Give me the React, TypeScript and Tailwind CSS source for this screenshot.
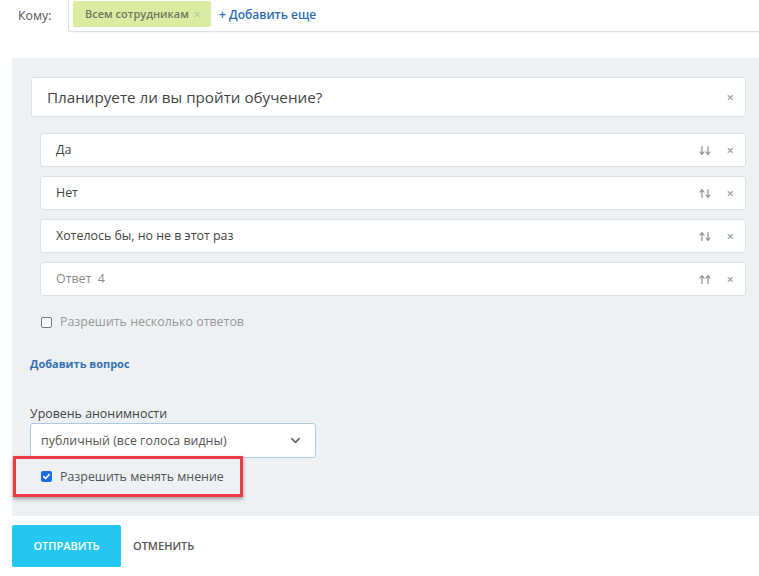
import { ChevronDown } from 'lucide-react';

type Dir = 'up' | 'down';

const answers: { text: string; arrows: [Dir, Dir]; placeholder: boolean }[] = [
  { text: 'Да', arrows: ['down', 'down'], placeholder: false },
  { text: 'Нет', arrows: ['up', 'down'], placeholder: false },
  { text: 'Хотелось бы, но не в этот раз', arrows: ['up', 'down'], placeholder: false },
  { text: 'Ответ  4', arrows: ['up', 'up'], placeholder: true },
];

function Cross() {
  return <span className="text-[13px] font-bold leading-none text-[#a9adb1]">×</span>;
}

function arrowPath(x: number, dir: Dir) {
  const shaft = `M${x} 1.5V9.5`;
  const head = dir === 'down' ? `M${x - 2} 7L${x} 9.5L${x + 2} 7` : `M${x - 2} 4L${x} 1.5L${x + 2} 4`;
  return shaft + head;
}

function SortArrows({ dirs }: { dirs: [Dir, Dir] }) {
  return (
    <svg width="12" height="11" viewBox="0 0 12 11" fill="none" className="mr-[16px] text-[#8c9094]">
      <path d={arrowPath(3, dirs[0]) + arrowPath(9, dirs[1])} stroke="currentColor" strokeWidth="1.2" strokeLinecap="round" strokeLinejoin="round" />
    </svg>
  );
}

function Box({ checked }: { checked?: boolean }) {
  if (checked) {
    return (
      <span className="flex h-[11px] w-[11px] items-center justify-center rounded-[2px] bg-[#1a6fe0]">
        <svg width="9" height="9" viewBox="0 0 10 10" fill="none">
          <path d="M2 5.2 4.1 7.3 8 2.8" stroke="white" strokeWidth="1.8" strokeLinecap="round" strokeLinejoin="round" />
        </svg>
      </span>
    );
  }
  return <span className="h-[11px] w-[11px] rounded-[2px] border border-[#777] bg-white" />;
}

export default function App() {
  return (
    <div className="min-h-[576px] w-[759px] overflow-hidden bg-white text-[12.4px] leading-[18px] text-[#444]" style={{ fontFamily: '"Open Sans", "Noto Sans", sans-serif' }}>
      {/* recipients */}
      <div className="flex h-[32px] items-start">
        <div className="w-[68px] pl-[18px] pt-[7px] text-[12.4px] text-[#555]">Кому:</div>
        <div className="flex h-[32px] flex-1 items-start gap-2 rounded-bl-[3px] border-b border-l border-[#dde1e5] pl-[4px] pt-[1px] shadow-[0_1px_1px_rgba(0,0,0,0.04)]">
          <span className="flex h-[26px] w-[138px] items-center justify-between whitespace-nowrap rounded-[2px] bg-[#daeca2] pl-[12px] pr-[10px] text-[11px] font-semibold text-[#70785c]">
            Всем сотрудникам
            <span className="text-[13px] font-normal text-[#b9c78f]">×</span>
          </span>
          <span className="pt-[5px] text-[12px] font-semibold text-[#2c6bb3]">+ Добавить еще</span>
        </div>
      </div>

      <div className="pl-3 pt-[26px]">
        <div className="flex h-[458px] flex-col bg-[#edf1f4] pl-[19px] pr-[13px] pt-[19px]">
          <div className="flex h-[40px] items-center justify-between rounded-[3px] border border-[#dce1e5] bg-white pl-[15px] pr-[11px]">
            <span className="text-[15.2px] text-[#444]">Планируете ли вы пройти обучение?</span>
            <Cross />
          </div>

          <div className="ml-[9px] mt-[16px] flex flex-col gap-[9px]">
            {answers.map((a) => (
              <div key={a.text} className="flex h-[34px] items-center rounded-[3px] border border-[#dce1e5] bg-white pl-[15px] pr-[11px]">
                <span className={a.placeholder ? 'flex-1 whitespace-pre text-[#888]' : 'flex-1 text-[#444]'}>{a.text}</span>
                <SortArrows dirs={a.arrows} />
                <Cross />
              </div>
            ))}
          </div>

          <div className="ml-[10px] mt-[17px] flex h-[18px] items-center gap-[8px]">
            <Box />
            <span className="text-[#999]">Разрешить несколько ответов</span>
          </div>

          <div className="-ml-[1px] mt-[24px] h-[18px] text-[11px] font-bold text-[#3470b5]">Добавить вопрос</div>

          <div className="-ml-[1px] mt-[32px] h-[18px] text-[#444]">Уровень анонимности</div>
          <div className="-ml-[1px] flex h-[35px] w-[286px] items-center justify-between rounded-[3px] border border-[#a9cbe6] bg-white pl-[10px] pr-[12px]">
            <span className="text-[#555]">публичный (все голоса видны)</span>
            <ChevronDown size={15} strokeWidth={2.5} className="text-[#666]" />
          </div>

          <div className="-ml-[18px] -mt-[2px] flex h-[41px] w-[230px] items-center gap-[8px] border-[3px] border-[#ef3a45] pl-[25px] shadow-[0_2px_4px_rgba(0,0,0,0.35)]">
            <Box checked />
            <span className="text-[#555]">Разрешить менять мнение</span>
          </div>
        </div>

        <div className="mt-[9px] flex items-center gap-[12px]">
          <button className="h-[42px] w-[109px] rounded-[2px] bg-[#25c6ef] text-[11px] font-semibold text-white">ОТПРАВИТЬ</button>
          <span className="text-[11px] font-semibold text-[#555]">ОТМЕНИТЬ</span>
        </div>
      </div>
    </div>
  );
}
